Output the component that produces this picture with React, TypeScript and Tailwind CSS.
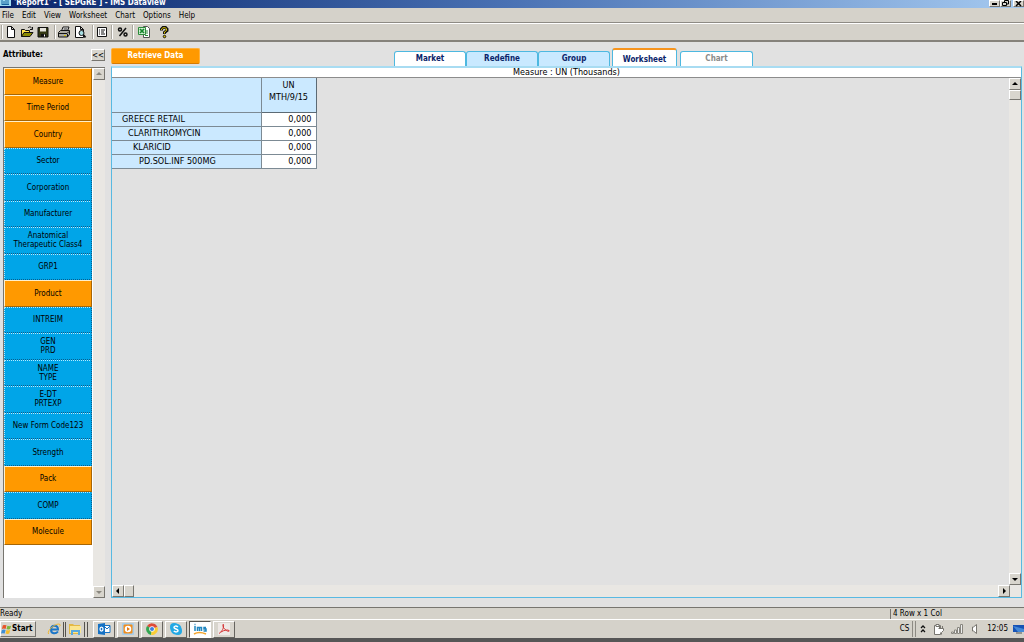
import type { ReactNode } from "react";

type Attribute = { label: string; active?: boolean };

const attributes: Attribute[] = [
  { label: "Measure", active: true },
  { label: "Time Period", active: true },
  { label: "Country", active: true },
  { label: "Sector" },
  { label: "Corporation" },
  { label: "Manufacturer" },
  { label: "Anatomical\nTherapeutic Class4" },
  { label: "GRP1" },
  { label: "Product", active: true },
  { label: "INTREIM" },
  { label: "GEN\nPRD" },
  { label: "NAME\nTYPE" },
  { label: "E-DT\nPRTEXP" },
  { label: "New Form Code123" },
  { label: "Strength" },
  { label: "Pack", active: true },
  { label: "COMP" },
  { label: "Molecule", active: true },
];

const rows = [
  { name: "GREECE RETAIL", indent: "pl-[10px]" },
  { name: "CLARITHROMYCIN", indent: "pl-[16px]" },
  { name: "KLARICID", indent: "pl-[21px]" },
  { name: "PD.SOL.INF 500MG", indent: "pl-[27px]" },
];

const raised = "border border-t-white border-l-white border-r-[#77756f] border-b-[#77756f] bg-[#d8d5cd]";

const Divider = () => <span className="h-[14px] w-[2px] shrink-0 border-l border-[#aaa79f] bg-white" />;

const Arrow = ({ dir, dim }: { dir: "up" | "down" | "left" | "right"; dim?: boolean }) => {
  const paths = {
    up: "M2 6L5 3L8 6Z",
    down: "M2 4L5 7L8 4Z",
    left: "M6 2L3 5L6 8Z",
    right: "M4 2L7 5L4 8Z",
  };
  return (
    <button aria-label={`Scroll ${dir}`} className={`flex size-[12px] shrink-0 items-center justify-center ${raised}`}>
      <svg viewBox="0 0 10 10" className="size-[10px] shrink-0" fill={dim ? "#8a8880" : "#000"}>
        <path d={paths[dir]} />
      </svg>
    </button>
  );
};

const ToolButton = ({ label, children }: { label: string; children: ReactNode }) => (
  <button aria-label={label} className="flex size-[16px] shrink-0 items-center justify-center">
    <svg viewBox="0 0 14 14" className="size-[14px]" fill="none" stroke="#111" strokeWidth={1}>
      {children}
    </svg>
  </button>
);

const TitleBar = () => (
  <header className="flex h-[8px] shrink-0 items-start justify-between bg-linear-to-r from-[#0a246a] via-[#4a72b4] to-[#a6caf0]">
    <div className="flex items-start gap-[3px]">
      <svg width={11} height={7} viewBox="0 0 11 7">
        <rect width={11} height={6} fill="#9fdcf2" />
        <path d="M2 0v5M4 1v4M6 0v5M8 0v5M2 4.500h7" stroke="#17649f" />
      </svg>
      <h1 className="text-[8px] leading-[6px] font-bold whitespace-pre text-white">'Report1' - [ SEPGRE ] - IMS Dataview</h1>
    </div>
    <div className="flex">
      <button aria-label="Minimize" className={`flex h-[7px] w-[11px] items-end justify-center ${raised}`}>
        <span className="mb-[1px] h-[2px] w-[5px] bg-black" />
      </button>
      <button aria-label="Restore" className={`mr-[2px] flex h-[7px] w-[11px] items-end justify-center ${raised}`}>
        <svg width={7} height={6} viewBox="0 0 7 6" fill="none" stroke="#000">
          <path d="M2.500 2V.500h4V4H5M.500 2.500h4v3h-4z" />
        </svg>
      </button>
      <button aria-label="Close" className={`flex h-[7px] w-[11px] items-center justify-center ${raised}`}>
        <svg width={7} height={6} viewBox="0 0 7 6" stroke="#000" strokeWidth={1.500}>
          <path d="M1 0L6 5M6 0L1 5" />
        </svg>
      </button>
    </div>
  </header>
);

const MenuBar = () => (
  <nav className="flex h-[15px] shrink-0 items-center gap-[8px] border-b border-[#8e8b84] bg-[#d5d2ca] pt-[1px] pl-[2px]">
    {["File", "Edit", "View", "Worksheet", "Chart", "Options", "Help"].map((item) => (
      <button key={item}>{item}</button>
    ))}
  </nav>
);

const Toolbar = () => (
  <div className="flex h-[19px] shrink-0 items-center border-t border-b-2 border-t-white border-b-[#85827b] bg-[#d5d2ca] pl-[1px]">
    <Divider />
    <ToolButton label="New">
      <path d="M3.500 1.500h4l3 3v8h-7zM7.500 1.500v3h3" fill="#fff" />
    </ToolButton>
    <ToolButton label="Open">
      <path d="M1.500 11.500v-7h3l1 1h4v2" fill="#ffe34d" />
      <path d="M1.500 11.500l2.500-4h9l-3 4z" fill="#8b8a00" />
      <path d="M8 3c1.500-2 3-1 4 .500M12.500 2v2.500H10" />
    </ToolButton>
    <ToolButton label="Save">
      <path d="M2 2.500h10v9.500H2z" fill="#333812" />
      <path d="M4 3h6v3.500H4z" fill="#e5e3dc" stroke="none" />
      <path d="M5 9h5v3H5z" fill="#111" stroke="none" />
      <path d="M8.500 9.500v2" stroke="#fff" />
    </ToolButton>
    <span className="w-[3px]" />
    <Divider />
    <ToolButton label="Print">
      <path d="M4.500 6l1.500-4h6l-1.500 4" fill="#fff" />
      <path d="M1.500 7.500l2-2h9v4l-2 2.500h-9z" fill="#aaa9a2" />
      <path d="M6.500 4h4M2 8.500h8l2-2M10.500 9v3" />
      <path d="M7 10.500h2" stroke="#d9c600" />
    </ToolButton>
    <ToolButton label="Print preview">
      <path d="M2.500 1.500h5l3 3v8h-8zM7.500 1.500v3h3" fill="#fff" />
      <circle cx={8.500} cy={8} r={2.500} fill="#a9e0e4" />
      <path d="M10.500 10l2 2.500" strokeWidth={2} />
    </ToolButton>
    <span className="w-[4px]" />
    <Divider />
    <ToolButton label="Properties">
      <path d="M2.500 2.500h9v9h-9z" fill="#fff" />
      <path d="M4 5h1M6 5h4M4 7h1M6 7h3M4 9h1M6 9h4" />
    </ToolButton>
    <span className="w-[1px]" />
    <Divider />
    <span className="w-[2px]" />
    <ToolButton label="Percent">
      <circle cx={4} cy={4.500} r={1.500} strokeWidth={1.500} />
      <circle cx={9.500} cy={9.500} r={1.500} strokeWidth={1.500} />
      <path d="M10 3L3.500 11" strokeWidth={1.500} />
    </ToolButton>
    <span className="w-[1px]" />
    <Divider />
    <span className="w-[2px]" />
    <ToolButton label="Export to Excel">
      <path d="M6.500 1.500h4l2 2v9h-6z" fill="#fff" stroke="#555" />
      <path d="M1.500 2.500h7v7h-7z" fill="#d3f1d5" stroke="#2c8b3a" />
      <path d="M3 4l4 4M7 4L3 8" stroke="#16852b" strokeWidth={1.750} />
      <path d="M9 6h2M9 8h2M8 10.500h3" stroke="#2c8b3a" />
    </ToolButton>
    <span className="w-[4px]" />
    <ToolButton label="Help">
      <path d="M4.500 5.500V4L6 2.500h2.500L10 4v1.500L7.500 7.500v1.500" strokeWidth={3} />
      <path d="M4.500 5V4L6 2.750h2.500L9.500 4v1.500L7.500 7v1.500" stroke="#e0c800" />
      <circle cx={7.500} cy={11.500} r={1.250} fill="#e0c800" />
    </ToolButton>
  </div>
);

const Sidebar = () => (
  <aside className="flex w-[111px] shrink-0 flex-col pr-[6px] pb-[9px] pl-[3px]">
    <div className="flex h-[24px] shrink-0 items-center justify-between">
      <h2 className="font-bold">Attribute:</h2>
      <button aria-label="Collapse" className={`h-[12px] w-[14px] text-center leading-[9px] ${raised}`}>
        &lt;&lt;
      </button>
    </div>
    <div className="flex min-h-0 flex-1 border-t border-l border-[#77756f] bg-white">
      <div className="min-w-0 flex-1 pr-[1px]">
        <div className="grid h-[477px] auto-rows-fr">
          {attributes.map(({ label, active }) => (
            <button
              key={label}
              className={`border text-center leading-[9px] whitespace-pre ${
                active
                  ? "border-t-[#fff0cc] border-l-[#fff0cc] border-r-[#a76605] border-b-[#a76605] bg-[#ff9900]"
                  : "border-dotted border-t-[#b5e9ff] border-l-[#b5e9ff] border-r-[#075d8c] border-b-[#075d8c] bg-[#00a5e8]"
              }`}
            >
              {label}
            </button>
          ))}
        </div>
      </div>
      <div className="flex w-[12px] flex-col justify-between bg-[#e9e7e3]">
        <Arrow dir="up" dim />
        <Arrow dir="down" dim />
      </div>
    </div>
  </aside>
);

const Tabs = () => {
  const base = "rounded-t-[3px] border border-b-0 border-[#4db8e0] font-bold";
  return (
    <div role="tablist" className="flex flex-1 items-end justify-center pr-[75px]">
      <button role="tab" className={`h-[15px] w-[72px] bg-white text-[#0a246a] ${base}`}>Market</button>
      <button role="tab" className={`h-[15px] w-[72px] bg-[#c9e9ff] text-[#0a246a] ${base}`}>Redefine</button>
      <button role="tab" className={`mr-[2px] h-[15px] w-[72px] bg-[#c9e9ff] text-[#0a246a] ${base}`}>Group</button>
      <button
        role="tab"
        aria-selected="true"
        className="mr-[3px] h-[18px] w-[65px] rounded-t-[3px] border border-t-2 border-b-0 border-[#4db8e0] border-t-[#f7941d] bg-white pt-[3px] font-bold text-[#0a246a]"
      >
        Worksheet
      </button>
      <button role="tab" className={`h-[15px] w-[73px] bg-white text-[#8a8a8a] ${base}`}>Chart</button>
    </div>
  );
};

const Worksheet = () => (
  <section className="flex min-h-0 flex-1 flex-col border border-t-2 border-[#58b9e2] border-t-[#a8dcf2]">
    <p className="h-[10px] shrink-0 border-b border-[#8c8c8c] bg-white text-center text-[9px] leading-[9px]">
      Measure : UN (Thousands)
    </p>
    <div className="flex min-h-0 flex-1">
      <div className="min-w-0 flex-1 bg-[#e1e1e1]">
        <table className="border-collapse text-[9px] leading-[12px]">
          <thead>
            <tr className="h-[34px] bg-[#cbe9ff]">
              <th aria-label="Product" className="w-[149px] border-r border-b border-[#7c8a94]" />
              <th className="w-[55px] border-r border-b border-[#5c6a74] pb-[8px] font-normal">
                UN
                <br />
                MTH/9/15
              </th>
            </tr>
          </thead>
          <tbody>
            {rows.map(({ name, indent }) => (
              <tr key={name} className="h-[14px]">
                <th className={`border-r border-b border-[#7c8a94] bg-[#cbe9ff] text-left font-normal ${indent}`}>{name}</th>
                <td className="border-r border-b border-[#7c8a94] bg-white pr-[4px] text-right">0,000</td>
              </tr>
            ))}
          </tbody>
        </table>
      </div>
      <div className="flex w-[12px] flex-col bg-[#e9e7e3]">
        <Arrow dir="up" />
        <span className={`h-[10px] ${raised}`} />
        <span className="flex-1" />
        <Arrow dir="down" />
      </div>
    </div>
    <div className="flex h-[12px] shrink-0 bg-[#e9e7e3] pr-[11px]">
      <Arrow dir="left" />
      <span className={`w-[10px] ${raised}`} />
      <span className="flex-1" />
      <Arrow dir="right" />
    </div>
  </section>
);

const TaskButton = ({ label, pressed, children }: { label: string; pressed?: boolean; children: ReactNode }) => (
  <button
    aria-label={label}
    className={`flex h-[17px] w-[22px] shrink-0 items-center justify-center border ${
      pressed
        ? "border-t-[#55534e] border-l-[#55534e] border-r-white border-b-white bg-white"
        : "border-t-white border-l-white border-r-[#66645f] border-b-[#66645f] bg-[#d8d5cd]"
    }`}
  >
    <svg viewBox="0 0 14 14" className="size-[14px]" fill="none">
      {children}
    </svg>
  </button>
);

const Taskbar = () => (
  <footer className="flex h-[23px] shrink-0 items-center border-t border-b-4 border-t-white border-b-[#565656] bg-[#d5d2ca]">
    <button className={`flex h-[16px] w-[36px] items-center font-bold ${raised}`}>
      <svg width={11} height={12} viewBox="0 0 12 12" className="shrink-0">
        <path d="M2 2q2-1 4 0L5 6Q3 5 1 6Z" fill="#e8562a" />
        <path d="M7 2.500q2 1 4 0L10 6Q8 7 6 6Z" fill="#7db73a" />
        <path d="M1 7q2-1 4 0l-1 4q-2-1-4 0Z" fill="#3f8fd5" />
        <path d="M6 7q2 1 4 0l-1 4q-2 1-4 0Z" fill="#f5bd28" />
      </svg>
      Start
    </button>
    <div className="flex h-[17px] items-center gap-[2px] pl-[11px]">
      <button aria-label="Internet Explorer">
        <svg width={14} height={14} viewBox="0 0 14 14" fill="none">
          <path d="M4 7.500h7C11 2.500 4 2.500 4 7.500S9 12 11 9.500" stroke="#1b76c8" strokeWidth={2} />
          <path d="M1.500 12C-.500 8 10 0 13 2.500q.500 1-.500 2" stroke="#efb72f" />
        </svg>
      </button>
      <span className="h-[15px] w-[3px] border-x border-[#55534e]" />
      <button aria-label="Windows Explorer">
        <svg width={14} height={14} viewBox="0 0 14 14">
          <path d="M1 2h4l1 1h6v9H1z" fill="#e3b844" />
          <path d="M2 4h11v7H2z" fill="#fbe690" />
          <path d="M3 13V8h9v5h-2v-3H5v3z" fill="#58a8de" />
        </svg>
      </button>
      <span className="h-[15px] w-[4px] border-x border-[#55534e]" />
    </div>
    <div className="flex gap-[2px] pl-[5px]">
      <TaskButton label="Outlook">
        <path d="M7 3.500h6v7H7z" fill="#fff" stroke="#1672c4" />
        <path d="M7 4l3 3 3-3" stroke="#1672c4" />
        <path d="M1 2l7-1v12l-7-1z" fill="#1672c4" />
        <ellipse cx={4.500} cy={7} rx={1.500} ry={2} stroke="#fff" strokeWidth={1.250} />
      </TaskButton>
      <TaskButton label="Media Player">
        <rect x={1} y={1} width={12} height={12} rx={1} fill="#a6cdea" />
        <rect x={2.500} y={2.500} width={9} height={9} rx={1} fill="#f08d1d" />
        <circle cx={7} cy={7} r={3.250} fill="#fff" />
        <path d="M6 5l3 2-3 2z" fill="#e87b12" />
      </TaskButton>
      <TaskButton label="Chrome">
        <path d="M7 7L2 4A6 6 0 0 1 12.500 5z" fill="#df4b38" />
        <path d="M7 7L2 4A6 6 0 0 0 6 13z" fill="#33a651" />
        <path d="M7 7l-1 6A6 6 0 0 0 12.500 5z" fill="#f9cd35" />
        <circle cx={7} cy={7} r={2.750} fill="#fff" />
        <circle cx={7} cy={7} r={2} fill="#3f80df" />
      </TaskButton>
      <TaskButton label="Skype">
        <circle cx={5} cy={5} r={4} fill="#22a9e5" />
        <circle cx={9} cy={9} r={4} fill="#22a9e5" />
        <circle cx={7} cy={7} r={5.500} fill="#22a9e5" />
        <path d="M9 5C7 3.500 5 4 5 5.500S9 7 9 8.500 6.500 10.500 4.750 9" stroke="#fff" strokeWidth={1.500} />
      </TaskButton>
      <TaskButton label="IMS Dataview" pressed>
        <path d="M2 4v5M4.500 9V5.500h2V9M6.500 5.500h2V9M13 5.500h-2v1.500h2V9h-2.500M1.500 2.500h1" stroke="#2186bf" strokeWidth={1.500} />
        <path d="M1 12q5-3 12 0" stroke="#f3a52f" strokeWidth={1.500} />
      </TaskButton>
      <TaskButton label="Adobe Reader">
        <rect x={1} y={1} width={12} height={12} fill="#eee9e6" />
        <path d="M2 11.500C5 9.500 7 6 6.500 2.500 6 1 5 5 8 7.500s5 2 4 1-5-.500-8 1.500" stroke="#d53535" />
      </TaskButton>
    </div>
    <span className="flex-1" />
    <span>CS</span>
    <div className="ml-[3px] flex h-[16px] items-center border-l border-[#8e8b84] pl-[2px]">
      <div className="flex h-[16px] items-center gap-[7px] border-l border-[#8e8b84] pl-[4px]">
        <button aria-label="Show hidden icons">
          <svg width={6} height={10} viewBox="0 0 6 10" fill="none" stroke="#111" strokeWidth={1.250}>
            <path d="M1 4l2-2 2 2M1 8l2-2 2 2" />
          </svg>
        </button>
        <svg width={11} height={12} viewBox="0 0 11 12" fill="#fff" stroke="#77756f">
          <path d="M1.500 2.500h6v9h-6z" />
          <path d="M3 1.500h3v2H3z" />
          <path d="M6.500 3v2M9.500 3v2M5.500 5.500h5v2l-2 2v2" />
        </svg>
        <svg width={13} height={10} viewBox="0 0 13 10" fill="#eee" stroke="#88867f">
          <path d="M.500 8v1.500h2V8zM3.500 6v3.500h2V6zM6.500 3.500v6h2v-6zM9.500 .500v9h2v-9z" />
        </svg>
        <svg width={9} height={10} viewBox="0 0 9 10" fill="#fff" stroke="#77756f">
          <path d="M1.500 3v4h1l3 2.500v-9l-3 2.500z" />
        </svg>
        <time>12:05</time>
      </div>
    </div>
    <svg width={11} height={10} viewBox="0 0 11 10" className="ml-[5px]">
      <rect y={1} width={11} height={7} fill="#1552b5" />
      <path d="M0 2l11 3v3H5z" fill="#4389d8" />
      <path d="M3 9h6" stroke="#555" />
    </svg>
  </footer>
);

const App = () => {
  return (
    <div className="flex h-screen w-full flex-col overflow-hidden bg-[#e1e1e1] font-['DejaVu_Sans_Condensed','DejaVu_Sans',sans-serif] text-[8px] leading-[10px] text-black">
      <TitleBar />
      <MenuBar />
      <Toolbar />
      <div className="flex min-h-0 flex-1 pt-[1px]">
        <Sidebar />
        <main className="flex min-w-0 flex-1 flex-col pr-[2px] pb-[9px]">
          <div className="flex h-[23px] shrink-0">
            <button className="mt-[5px] h-[16px] w-[89px] rounded-[2px] border border-[#ffb13d] border-b-[#d77b00] bg-[#ff9900] font-bold text-white">
              Retrieve Data
            </button>
            <Tabs />
          </div>
          <Worksheet />
        </main>
      </div>
      <div className="flex h-[12px] shrink-0 items-center border-t border-[#77756f] bg-[#d5d2ca]">
        <p className="flex-1">Ready</p>
        <p className="w-[134px] border-l border-[#77756f] pl-[2px]">4 Row x 1 Col</p>
      </div>
      <Taskbar />
    </div>
  );
};

export default App;
